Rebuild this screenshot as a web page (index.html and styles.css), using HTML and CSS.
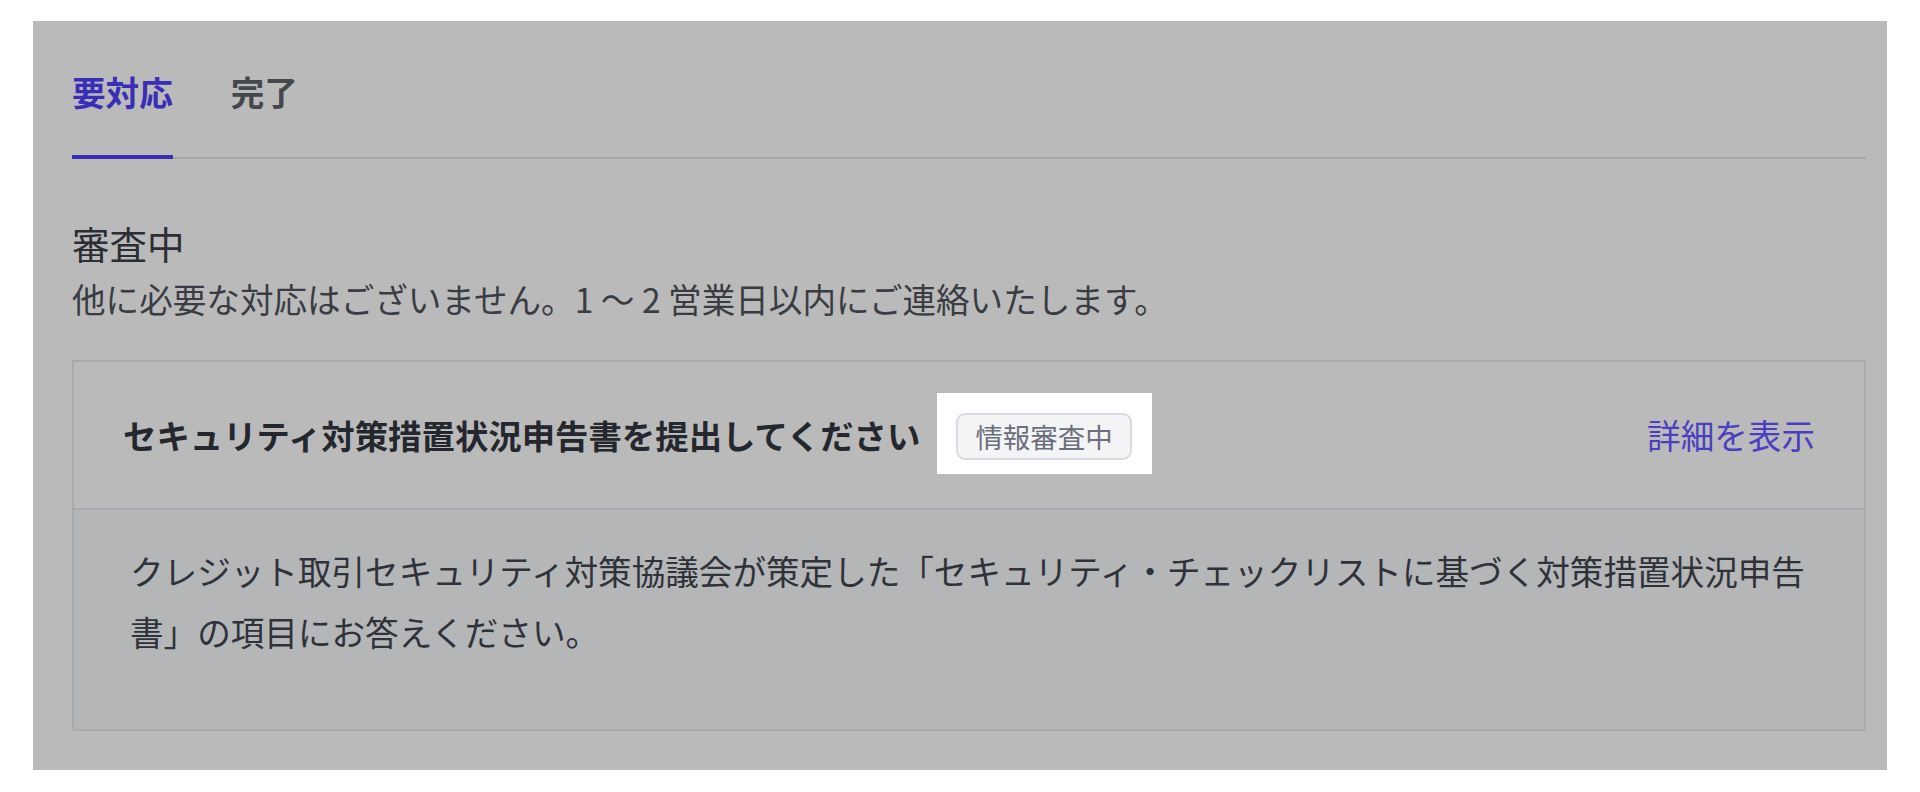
FILE: index.html
```html
<!DOCTYPE html>
<html lang="ja">
<head>
<meta charset="utf-8">
<title>要対応</title>
<link rel="stylesheet" href="styles.css">
</head>
<body>
<div class="panel">
  <nav class="tabs">
    <div class="tab tab-active">要対応</div>
    <div class="tab">完了</div>
  </nav>
  <section class="status">
    <h2 class="status-title">審査中</h2>
    <p class="status-text">他に必要な対応はございません。1 〜 2 営業日以内にご連絡いたします。</p>
  </section>
  <div class="card">
    <div class="card-header">
      <div class="card-heading">
        <span class="card-title">セキュリティ対策措置状況申告書を提出してください</span>
        <span class="spotlight"><span class="badge">情報審査中</span></span>
      </div>
      <a class="card-link">詳細を表示</a>
    </div>
    <div class="card-body">
      <p class="card-text">クレジット取引セキュリティ対策協議会が策定した「セキュリティ・チェックリストに基づく対策措置状況申告書」の項目にお答えください。</p>
    </div>
  </div>
</div>
</body>
</html>
```

FILE: styles.css
```css
html, body {
  margin: 0;
  padding: 0;
  background: #ffffff;
}

body {
  padding: 21px 33px 0 33px;
  font-family: "Noto Sans CJK JP", "Noto Sans", sans-serif;
  color: #2e3038;
}

.panel {
  background: #bababa;
  padding: 47px 21px 39px 39px;
}

.tabs {
  display: flex;
  gap: 58px;
  border-bottom: 2px solid #a3a6aa;
}

.tab {
  font-size: 33.6px;
  line-height: 48px;
  font-weight: 700;
  color: #45474f;
  padding-bottom: 39px;
  border-bottom: 4px solid transparent;
  margin-bottom: -2px;
}

.tab-active {
  color: #3a2eb6;
  border-bottom-color: #3a2eb6;
}

.status {
  margin-top: 58px;
}

.status-title {
  margin: 0;
  font-size: 37.5px;
  line-height: 52px;
  font-weight: 400;
  color: #2c2e36;
}

.status-text {
  margin: 3px 0 0 0;
  font-size: 33.6px;
  line-height: 54px;
  color: #3a3c44;
}

.card {
  margin-top: 34px;
  border: 2px solid #a7aaaf;
}

.card-header {
  height: 146px;
  padding: 0 49px;
  display: flex;
  align-items: center;
  justify-content: space-between;
  border-bottom: 2px solid #a7aaaf;
}

.card-heading {
  display: flex;
  align-items: center;
  gap: 36px;
}

.card-title {
  font-size: 33.4px;
  line-height: 48px;
  font-weight: 700;
  color: #25272e;
}

.spotlight {
  display: inline-flex;
  background: #ffffff;
  padding: 20px 20px 14px 19px;
  margin: -18px -20px -14px -19px;
}

.badge {
  display: inline-block;
  box-sizing: border-box;
  height: 47px;
  padding: 0 17px;
  border: 2px solid #d8dbe1;
  border-radius: 9px;
  background: #f3f4f6;
  color: #6b6f7c;
  font-size: 27.5px;
  line-height: 42px;
}

.card-link {
  font-size: 33.6px;
  line-height: 48px;
  color: #4a3fc2;
  text-decoration: none;
}

.card-body {
  background: #b5b6b8;
  padding: 30px 49px 67px 56px;
}

.card-text {
  margin: 0;
  font-size: 33.6px;
  line-height: 61px;
  color: #30323a;
}
```
